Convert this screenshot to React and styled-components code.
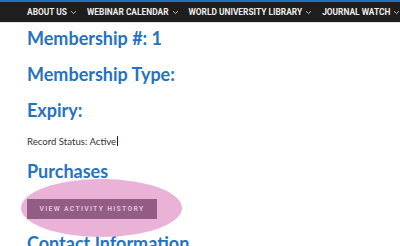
import React from 'react';
import styled, { createGlobalStyle } from 'styled-components';

const Global = createGlobalStyle`
    html, body {
        margin: 0;
        padding: 0;
        background: #FFFFFF;
        overflow: hidden;
    }
    body {
        font-family: 'Lato', 'Open Sans', sans-serif;
    }
`

const Page = styled.div`
    width: 400px;
    height: 246px;
    overflow: hidden;
`

const NavBar = styled.nav`
    height: 20px;
    background: #1E1E1E;
    border-top: 2px solid #1E73BE;
    border-bottom: 1px solid #E4E4E4;
    display: flex;
    align-items: center;
    padding-left: 27px;
    gap: 10px;
    white-space: nowrap;
`

const NavItem = styled.div`
    display: flex;
    align-items: center;
    gap: 3px;
    font-family: 'Roboto', sans-serif;
    font-weight: 700;
    font-size: 8.4px;
    color: #EDEDED;
`

const Chevron = () => (
    <svg width="7" height="5" viewBox="0 0 7 5">
        <path d="M1 1.2 L3.5 3.6 L6 1.2" stroke="#CFCFCF" strokeWidth="0.9" fill="none" />
    </svg>
)

const Main = styled.main`
    padding: 3px 0 0 27px;
`

const Heading = styled.h2`
    margin: 0 0 ${props => props.gap || 12}px;
    font-family: 'Lato', sans-serif;
    font-weight: 700;
    font-size: 18px;
    line-height: 24px;
    color: #2672C2;
`

const Status = styled.p`
    margin: 0 0 10px;
    font-family: 'Lato', sans-serif;
    font-size: 9.6px;
    line-height: 14px;
    color: #333333;
`

const Cursor = styled.span`
    display: inline-block;
    width: 1px;
    height: 10px;
    background: #222222;
    vertical-align: -1px;
    margin-left: 0.5px;
`

const ButtonWrap = styled.div`
    position: relative;
    width: 130px;
    margin: 16px 0 12px;
`

const Highlight = styled.div`
    position: absolute;
    left: -6px;
    top: -20px;
    width: 161px;
    height: 58px;
    border-radius: 50%;
    background: #EAB2D7;
    z-index: 0;
`

const HistoryButton = styled.button`
    position: relative;
    z-index: 1;
    display: block;
    width: 130px;
    height: 20px;
    padding: 0;
    border: none;
    background: #925C85;
    font-family: 'Roboto', sans-serif;
    font-weight: 700;
    font-size: 6.8px;
    letter-spacing: 1.3px;
    color: #E6BCD9;
`

const App = () => {
    const menu = ['ABOUT US', 'WEBINAR CALENDAR', 'WORLD UNIVERSITY LIBRARY', 'JOURNAL WATCH']

    return (
        <Page>
            <Global />
            <NavBar>
                {menu.map(item => (
                    <NavItem key={item}>{item}<Chevron /></NavItem>
                ))}
            </NavBar>
            <Main>
                <Heading>Membership #: 1</Heading>
                <Heading>Membership Type:</Heading>
                <Heading gap={13}>Expiry:</Heading>
                <Status>Record Status: Active<Cursor /></Status>
                <Heading gap={0}>Purchases</Heading>
                <ButtonWrap>
                    <Highlight />
                    <HistoryButton>VIEW ACTIVITY HISTORY</HistoryButton>
                </ButtonWrap>
                <Heading>Contact Information</Heading>
            </Main>
        </Page>
    );
};

export default App;
